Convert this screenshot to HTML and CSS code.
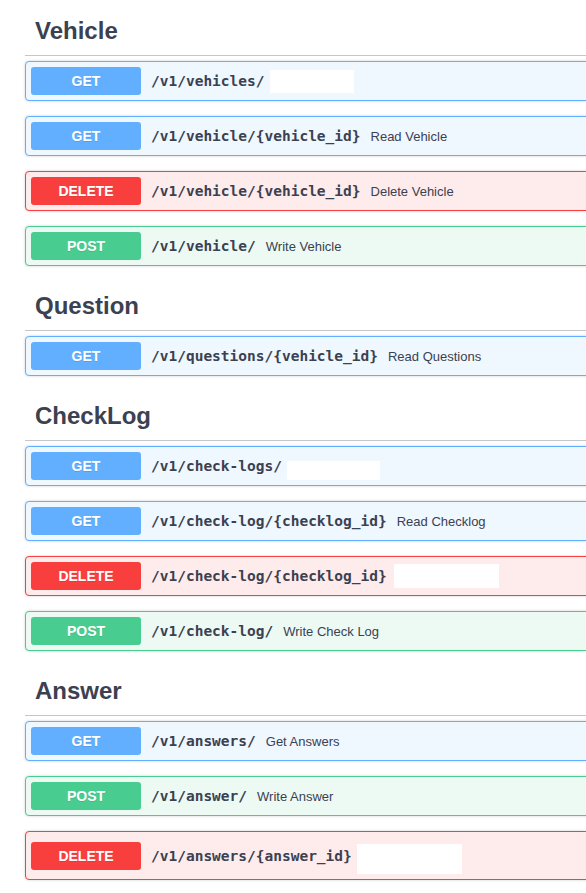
FILE: index.html
```html
<!DOCTYPE html>
<html>
<head>
<meta charset="utf-8">
<link rel="stylesheet" href="styles.css">
</head>
<body>
<div class="wrap">
  <section class="tag">
    <h3 class="tag-title">Vehicle</h3>
    <div class="op get"><span class="method">GET</span><span class="path">/v1/vehicles/</span><span class="redact r-vehicles"></span></div>
    <div class="op get"><span class="method">GET</span><span class="path">/v1/vehicle/{vehicle_id}</span><span class="desc">Read Vehicle</span></div>
    <div class="op delete"><span class="method">DELETE</span><span class="path">/v1/vehicle/{vehicle_id}</span><span class="desc">Delete Vehicle</span></div>
    <div class="op post"><span class="method">POST</span><span class="path">/v1/vehicle/</span><span class="desc">Write Vehicle</span></div>
  </section>
  <section class="tag">
    <h3 class="tag-title">Question</h3>
    <div class="op get"><span class="method">GET</span><span class="path">/v1/questions/{vehicle_id}</span><span class="desc">Read Questions</span></div>
  </section>
  <section class="tag">
    <h3 class="tag-title">CheckLog</h3>
    <div class="op get"><span class="method">GET</span><span class="path">/v1/check-logs/</span><span class="redact r-checklogs"></span></div>
    <div class="op get"><span class="method">GET</span><span class="path">/v1/check-log/{checklog_id}</span><span class="desc">Read Checklog</span></div>
    <div class="op delete"><span class="method">DELETE</span><span class="path">/v1/check-log/{checklog_id}</span><span class="redact r-checklog-del"></span></div>
    <div class="op post"><span class="method">POST</span><span class="path">/v1/check-log/</span><span class="desc">Write Check Log</span></div>
  </section>
  <section class="tag">
    <h3 class="tag-title">Answer</h3>
    <div class="op get"><span class="method">GET</span><span class="path">/v1/answers/</span><span class="desc">Get Answers</span></div>
    <div class="op post"><span class="method">POST</span><span class="path">/v1/answer/</span><span class="desc">Write Answer</span></div>
    <div class="op delete"><span class="method">DELETE</span><span class="path">/v1/answers/{answer_id}</span><span class="redact r-answer-del"></span></div>
  </section>
</div>
</body>
</html>
```
FILE: styles.css
```css
html, body {
  margin: 0;
  padding: 0;
  background: #fff;
  overflow: hidden;
}
body {
  font-family: "Liberation Sans", Arial, sans-serif;
  color: #3b4151;
}
.wrap {
  padding: 6px 0 0 25px;
  width: 700px;
}
.tag-title {
  margin: 0 0 5px;
  padding: 10px 20px 10px 10px;
  font-size: 24px;
  line-height: 29px;
  font-weight: bold;
  color: #3b4151;
  border-bottom: 1px solid rgba(59, 65, 81, 0.3);
}
.op {
  display: flex;
  align-items: center;
  padding: 5px;
  border: 1px solid;
  border-radius: 4px;
  margin-bottom: 15px;
  box-shadow: 0 0 3px rgba(0, 0, 0, 0.19);
}
.op.get { background: #eff7ff; border-color: #61affe; }
.op.delete { background: #feebeb; border-color: #f93e3e; }
.op.post { background: #edfaf4; border-color: #49cc90; }
.method {
  width: 110px;
  height: 28px;
  flex: none;
  border-radius: 3px;
  color: #fff;
  font-size: 14px;
  font-weight: bold;
  display: flex;
  align-items: center;
  justify-content: center;
  text-shadow: 0 1px 0 rgba(0, 0, 0, 0.1);
}
.get .method { background: #61affe; }
.delete .method { background: #f93e3e; }
.post .method { background: #49cc90; }
.path {
  margin-left: 10px;
  font-family: "DejaVu Sans Mono", "Liberation Mono", monospace;
  font-weight: bold;
  font-size: 14.5px;
  color: #3b4151;
  white-space: nowrap;
}
.desc {
  margin-left: 10px;
  font-size: 13px;
  color: #3b4151;
  white-space: nowrap;
}
.redact {
  display: block;
  background: #fff;
  margin-left: 5px;
}
.r-vehicles { width: 84px; height: 23px; }
.r-checklogs { width: 93px; height: 19px; margin-top: 8px; }
.r-checklog-del { width: 105px; height: 24px; margin-left: 7px; }
.r-answer-del { width: 105px; height: 30px; margin-top: 7px; }
```
